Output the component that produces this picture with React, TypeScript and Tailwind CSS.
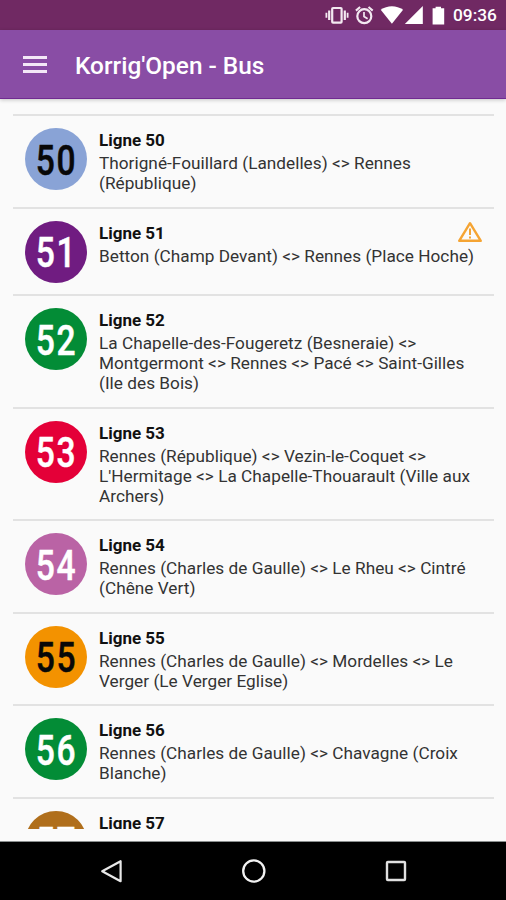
type Line = {
  number: string;
  color: string;
  text: string;
  height: string;
  route: string[];
  alert?: boolean;
};

const lines: Line[] = [
  {
    number: "50",
    color: "bg-[#89a3d6]",
    text: "text-[#080808]",
    height: "h-[92.5px]",
    route: ["Thorigné-Fouillard (Landelles) <> Rennes", "(République)"],
  },
  {
    number: "51",
    color: "bg-[#701c81]",
    text: "text-white",
    height: "h-[87.5px]",
    route: ["Betton (Champ Devant) <> Rennes (Place Hoche)"],
    alert: true,
  },
  {
    number: "52",
    color: "bg-[#038c36]",
    text: "text-white",
    height: "h-[112.5px]",
    route: [
      "La Chapelle-des-Fougeretz (Besneraie) <>",
      "Montgermont <> Rennes <> Pacé <> Saint-Gilles",
      "(Ile des Bois)",
    ],
  },
  {
    number: "53",
    color: "bg-[#e40038]",
    text: "text-white",
    height: "h-[112.5px]",
    route: [
      "Rennes (République) <> Vezin-le-Coquet <>",
      "L'Hermitage <> La Chapelle-Thouarault (Ville aux",
      "Archers)",
    ],
  },
  {
    number: "54",
    color: "bg-[#ba63a5]",
    text: "text-white",
    height: "h-[92.5px]",
    route: ["Rennes (Charles de Gaulle) <> Le Rheu <> Cintré", "(Chêne Vert)"],
  },
  {
    number: "55",
    color: "bg-[#f39200]",
    text: "text-[#080808]",
    height: "h-[92.5px]",
    route: ["Rennes (Charles de Gaulle) <> Mordelles <> Le", "Verger (Le Verger Eglise)"],
  },
  {
    number: "56",
    color: "bg-[#038c36]",
    text: "text-white",
    height: "h-[92.5px]",
    route: ["Rennes (Charles de Gaulle) <> Chavagne (Croix", "Blanche)"],
  },
  {
    number: "57",
    color: "bg-[#b06f1c]",
    text: "text-white",
    height: "h-[92.5px]",
    route: [],
  },
];

function StatusBar() {
  return (
    <div className="flex h-[30px] shrink-0 items-center bg-[#702963] pl-[325px] text-white">
      <svg className="h-[30px] w-[122px] shrink-0" viewBox="325 0 122 30" fill="none" aria-hidden="true">
        <rect x="332.2" y="8" width="9.4" height="14.6" rx="0.8" stroke="#f3e9f1" strokeWidth="2.2" />
        <path d="M329.2 10.5v9.6M344.8 10.5v9.6" stroke="#f3e9f1" strokeWidth="2.2" />
        <path d="M326.4 12.8v5M347.6 12.8v5" stroke="#f3e9f1" strokeWidth="1.8" />
        <circle cx="364.3" cy="16.2" r="7" stroke="#f3e9f1" strokeWidth="2.2" />
        <path d="M364 12v4.6l3.6 2.2" stroke="#f3e9f1" strokeWidth="1.7" />
        <path d="M355.9 10.6l4.2-3.6M372.7 10.6l-4.2-3.6" stroke="#f3e9f1" strokeWidth="2.1" />
        <path d="M380.7 9.8c6.5-4.8 15.9-4.8 22.4 0L391.9 23.8z" fill="#fff" />
        <path d="M422.8 6v18h-18z" fill="#fff" />
        <path d="M432.6 8.2h3V6.8h5.4v1.4h3.2V24.4h-11.6z" fill="#fff" />
      </svg>
      <span className="pl-[6px] pt-[2px] text-[17.3px] font-medium leading-none">09:36</span>
    </div>
  );
}

function AppBar() {
  return (
    <header className="relative z-10 flex h-[69px] shrink-0 items-center border-b border-[#702b91] bg-[#894da5] pl-[23px] shadow-[0_1px_4px_rgba(0,0,0,0.22)]">
      <button type="button" aria-label="Menu" className="flex flex-col gap-1">
        <span className="h-[3px] w-6 bg-[#f3e8f7]" />
        <span className="h-[3px] w-6 bg-[#f3e8f7]" />
        <span className="h-[3px] w-6 bg-[#f3e8f7]" />
      </button>
      <h1 className="pl-[28px] pt-[4px] text-[24.4px] font-medium leading-none text-white">
        Korrig'Open - Bus
      </h1>
    </header>
  );
}

function LineRow({ line }: { line: Line }) {
  return (
    <li className={`flex shrink-0 border-t-2 border-[#e2e2e2] pl-3 ${line.height}`}>
      <div className={`mt-3 flex size-[62px] shrink-0 items-center justify-center rounded-full pt-[2px] ${line.color}`}>
        <span className={`scale-x-[0.78] text-[43px] font-semibold leading-none tracking-[2px] [-webkit-text-stroke:0.5px_currentColor] [font-weight:500] ${line.text}`}>
          {line.number}
        </span>
      </div>
      <div className="min-w-0 flex-1 pl-3 pt-[13px]">
        <div className="flex justify-between">
          <h2 className="text-[17px] font-bold leading-[22px] text-[#111]">Ligne {line.number}</h2>
          {line.alert && (
            <svg className="mr-[11px] -mt-px h-[22px] w-[26px]" viewBox="0 0 26 22" fill="none" aria-hidden="true">
              <path d="M13 2.2L23.8 19.8H2.2z" stroke="#f5a433" strokeWidth="2.4" strokeLinejoin="round" />
              <path d="M13 7.5v6.5M13 15.5v2" stroke="#f5a433" strokeWidth="2" />
            </svg>
          )}
        </div>
        <p className="whitespace-nowrap pt-[2px] text-[17.2px] leading-[20.2px] tracking-[0.03px] text-[#333]">
          {line.route.map((part) => (
            <span key={part} className="block">
              {part}
            </span>
          ))}
        </p>
      </div>
    </li>
  );
}

function NavigationBar() {
  return (
    <nav className="flex h-[58px] shrink-0 items-center justify-between bg-black pl-[98px] pr-[96px]">
      <svg className="size-7" viewBox="0 0 28 28" fill="none" aria-hidden="true">
        <path d="M22.6 4.2v20L4.2 14.2z" stroke="#e8e8e8" strokeWidth="2.2" strokeLinejoin="round" />
      </svg>
      <svg className="size-7" viewBox="0 0 28 28" fill="none" aria-hidden="true">
        <circle cx="13.8" cy="14" r="10.6" stroke="#f2f2f2" strokeWidth="2.3" />
      </svg>
      <svg className="size-7" viewBox="0 0 28 28" fill="none" aria-hidden="true">
        <rect x="5" y="5" width="18" height="18" rx="0.8" stroke="#e0e0e0" strokeWidth="2.4" />
      </svg>
    </nav>
  );
}

export default function App() {
  return (
    <main className="flex h-[900px] w-[506px] flex-col overflow-hidden bg-[#fafafa] font-['Roboto',sans-serif]">
      <StatusBar />
      <AppBar />
      <div className="h-[743px] shrink-0 border-b border-[#8b8f8f] px-3 pb-3">
        <ul className="flex h-[730px] flex-col overflow-hidden pl-px pt-[15px]">
          {lines.map((line) => (
            <LineRow key={line.number} line={line} />
          ))}
        </ul>
      </div>
      <NavigationBar />
    </main>
  );
}
